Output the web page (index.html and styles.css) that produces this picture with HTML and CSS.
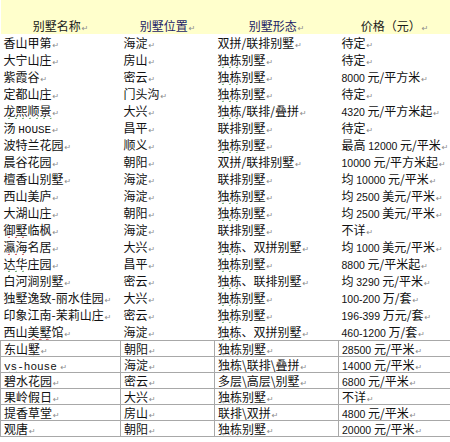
FILE: index.html
```html
<!DOCTYPE html>
<html lang="zh">
<head>
<meta charset="utf-8">
<title>别墅</title>
<link rel="stylesheet" href="styles.css">
</head>
<body>
<table class="villas">
  <colgroup><col class="c1"><col class="c2"><col class="c3"><col class="c4"></colgroup>
  <thead>
    <tr class="head">
      <th>别墅名称<i>↵</i></th>
      <th class="navy">别墅位置<i>↵</i></th>
      <th class="navy">别墅形态<i>↵</i></th>
      <th>价格（元）<i>↵</i></th>
    </tr>
  </thead>
  <tbody>
    <tr><td>香山甲第<i>↵</i></td><td>海淀<i>↵</i></td><td>双拼/联排别墅<i>↵</i></td><td>待定<i>↵</i></td></tr>
    <tr><td>大宁山庄<i>↵</i></td><td>房山<i>↵</i></td><td><u>独栋</u>别墅<i>↵</i></td><td>待定<i>↵</i></td></tr>
    <tr><td>紫霞谷<i>↵</i></td><td>密云<i>↵</i></td><td><u>独栋</u>别墅<i>↵</i></td><td><b>8000</b> 元/平方米<i>↵</i></td></tr>
    <tr><td>定都山庄<i>↵</i></td><td>门头沟<i>↵</i></td><td><u>独栋</u>别墅<i>↵</i></td><td>待定<i>↵</i></td></tr>
    <tr><td><u>龙熙顺景</u><i>↵</i></td><td>大兴<i>↵</i></td><td><u>独栋</u>/联排/叠拼<i>↵</i></td><td><b>4320</b> 元/平方米起<i>↵</i></td></tr>
    <tr><td>汤 <span class="lat">HOUSE</span><i>↵</i></td><td>昌平<i>↵</i></td><td>联排别墅<i>↵</i></td><td>待定<i>↵</i></td></tr>
    <tr><td>波特兰花园<i>↵</i></td><td>顺义<i>↵</i></td><td><u>独栋</u>别墅<i>↵</i></td><td>最高 <b>12000</b> 元/平米<i>↵</i></td></tr>
    <tr><td>晨谷花园<i>↵</i></td><td>朝阳<i>↵</i></td><td>双拼/联排别墅<i>↵</i></td><td><b>10000</b> 元/平方米起<i>↵</i></td></tr>
    <tr><td>檀香山别墅<i>↵</i></td><td>海淀<i>↵</i></td><td>联排别墅<i>↵</i></td><td>均 <b>10000</b> 元/平米<i>↵</i></td></tr>
    <tr><td>西山美庐<i>↵</i></td><td>海淀<i>↵</i></td><td><u>独栋</u>别墅<i>↵</i></td><td>均 <b>2500</b> 美元/平米<i>↵</i></td></tr>
    <tr><td>大湖山庄<i>↵</i></td><td>朝阳<i>↵</i></td><td><u>独栋</u>别墅<i>↵</i></td><td>均 <b>2500</b> 美元/平米<i>↵</i></td></tr>
    <tr><td><s>御墅</s>临枫<i>↵</i></td><td>海淀<i>↵</i></td><td>联排别墅<i>↵</i></td><td>不详<i>↵</i></td></tr>
    <tr><td><s>瀛海</s>名居<i>↵</i></td><td>大兴<i>↵</i></td><td><u>独栋</u>、双拼别墅<i>↵</i></td><td>均 <b>1000</b> 美元/平米<i>↵</i></td></tr>
    <tr><td><u>达华</u>庄园<i>↵</i></td><td>昌平<i>↵</i></td><td><u>独栋</u>别墅<i>↵</i></td><td><b>8800</b> 元/平米起<i>↵</i></td></tr>
    <tr><td>白河涧别墅<i>↵</i></td><td>密云<i>↵</i></td><td><u>独栋</u>、联排别墅<i>↵</i></td><td>均 <b>3290</b> 元/平米<i>↵</i></td></tr>
    <tr><td>独墅逸致-丽水佳园<i>↵</i></td><td>大兴<i>↵</i></td><td><u>独栋</u>别墅<i>↵</i></td><td><b>100-200</b> 万/套<i>↵</i></td></tr>
    <tr><td>印象江南-茉莉山庄<i>↵</i></td><td>密云<i>↵</i></td><td><u>独栋</u>别墅<i>↵</i></td><td><b>196-399</b> 万元/套<i>↵</i></td></tr>
    <tr><td>西山<s>美墅</s>馆<i>↵</i></td><td>海淀<i>↵</i></td><td><u>独栋</u>、双拼别墅<i>↵</i></td><td><b>460-1200</b> 万/套<i>↵</i></td></tr>
    <tr class="boxed"><td>东山<s>墅</s><i>↵</i></td><td>朝阳<i>↵</i></td><td><u>独栋</u>别墅<i>↵</i></td><td><b>28500</b> 元/平米<i>↵</i></td></tr>
    <tr class="boxed"><td><span class="lat"><u>vs</u>-house</span> <i>↵</i></td><td>海淀<i>↵</i></td><td><u>独栋</u>\联排\叠拼<i>↵</i></td><td><b>14000</b> 元/平米<i>↵</i></td></tr>
    <tr class="boxed"><td>碧水花园<i>↵</i></td><td>密云<i>↵</i></td><td>多层\高层\别墅<i>↵</i></td><td><b>6800</b> 元/平米<i>↵</i></td></tr>
    <tr class="boxed"><td>果岭假日<i>↵</i></td><td>大兴<i>↵</i></td><td><u>独栋</u>别墅<i>↵</i></td><td>不详<i>↵</i></td></tr>
    <tr class="boxed"><td>提香草堂<i>↵</i></td><td>房山<i>↵</i></td><td>联排\双拼<i>↵</i></td><td><b>4800</b> 元/平米<i>↵</i></td></tr>
    <tr class="boxed last"><td>观唐<i>↵</i></td><td>朝阳<i>↵</i></td><td><u>独栋</u>别墅<i>↵</i></td><td><b>20000</b> 元/平米<i>↵</i></td></tr>
  </tbody>
</table>
</body>
</html>
```
FILE: styles.css
```css
html, body {
  margin: 0;
  padding: 0;
  background: #ffffff;
}
body {
  font-family: "Noto Sans CJK SC", "DejaVu Sans", sans-serif;
  font-size: 12px;
  color: #111111;
}
.villas {
  width: 450px;
  border-collapse: collapse;
  table-layout: fixed;
}
.c1 { width: 120px; }
.c2 { width: 94px; }
.c3 { width: 124px; }
.c4 { width: 112px; }

.head th {
  height: 34px;
  padding: 0;
  background: #ffffcc;
  font-weight: normal;
  text-align: center;
  vertical-align: bottom;
  line-height: 17px;
  color: #1a1a1a;
}
.head th.navy { color: #1c1c66; }

td {
  height: 17px;
  padding: 0 0 0 3px;
  line-height: 17px;
  white-space: nowrap;
  overflow: hidden;
  vertical-align: middle;
}
td *, th * {
  line-height: 0;
}
td i, th i {
  font-style: normal;
  font-size: 8px;
  color: #8a8a8a;
  margin-left: 1px;
}
b {
  font-weight: normal;
  font-family: "Liberation Sans", "DejaVu Sans", sans-serif;
  font-size: 10.5px;
}
.lat {
  font-family: "Liberation Mono", "DejaVu Sans Mono", monospace;
  font-size: 11px;
}
u {
  text-decoration: underline wavy #5aa05a;
  text-decoration-thickness: 1px;
  text-underline-offset: 1px;
}
s {
  text-decoration: underline wavy #d04040;
  text-decoration-thickness: 1px;
  text-underline-offset: 1px;
}
.boxed td {
  height: 15px;
  line-height: 15px;
  border-top: 1px solid #a8a8a8;
  border-left: 1px solid #a8a8a8;
  border-right: 1px solid #a8a8a8;
}
.boxed.last td {
  border-bottom: 1px solid #a8a8a8;
}
```
